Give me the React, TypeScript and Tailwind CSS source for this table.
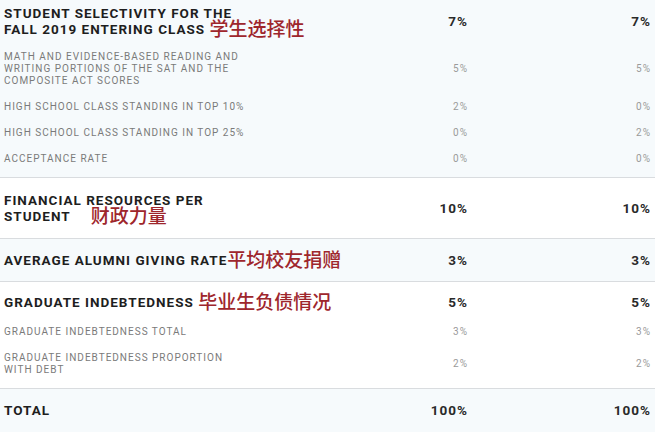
import React from "react";

type Sub = { label: React.ReactNode; a: string; b: string };

const font = { fontFamily: "Roboto, 'Noto Sans CJK SC', sans-serif" };

function Cn({ children, className = "" }: { children: React.ReactNode; className?: string }) {
  return (
    <span
      className={`align-[-2px] text-[19px] leading-[0] font-medium tracking-normal text-[#9e262c] ${className}`}
      style={{ fontFamily: "'Noto Sans CJK SC', sans-serif" }}
    >
      {children}
    </span>
  );
}

function Head({ label, value, className = "" }: { label: React.ReactNode; value: string; className?: string }) {
  return (
    <div className={`grid grid-cols-[250px_214px_183px] items-center ${className}`}>
      <div className="whitespace-nowrap text-[13.5px] leading-4 font-bold tracking-[1px] text-[#1e1e1e]">{label}</div>
      <div className="text-right text-[13.5px] leading-4 font-bold tracking-[1px] text-[#2a2a2a]">{value}</div>
      <div className="text-right text-[13.5px] leading-4 font-bold tracking-[1px] text-[#2a2a2a]">{value}</div>
    </div>
  );
}

function SubRow({ label, a, b }: Sub) {
  return (
    <div className="grid grid-cols-[250px_214px_183px] items-center py-[7px]">
      <div className="pr-1 text-[10px] leading-3 tracking-[1px] text-[#7a7a7a]">{label}</div>
      <div className="text-right text-[10px] leading-3 tracking-[1px] text-[#9a9a9a]">{a}</div>
      <div className="text-right text-[10px] leading-3 tracking-[1px] text-[#9a9a9a]">{b}</div>
    </div>
  );
}

export default function App() {
  return (
    <div className="h-[432px] w-[666px] overflow-hidden bg-white" style={font}>
      <div className="w-[655px]">
        <section className="border-b border-[#d9dcdf] bg-[#f6fafc] pt-[5px] pb-[5px] pl-1 pr-1">
          <Head
            className="pb-[7px]"
            value="7%"
            label={
              <>
                STUDENT SELECTIVITY FOR THE
                <br />
                FALL 2019 ENTERING CLASS <Cn>学生选择性</Cn>
              </>
            }
          />
          <SubRow label="MATH AND EVIDENCE-BASED READING AND WRITING PORTIONS OF THE SAT AND THE COMPOSITE ACT SCORES" a="5%" b="5%" />
          <SubRow label="HIGH SCHOOL CLASS STANDING IN TOP 10%" a="2%" b="0%" />
          <SubRow label="HIGH SCHOOL CLASS STANDING IN TOP 25%" a="0%" b="2%" />
          <SubRow label="ACCEPTANCE RATE" a="0%" b="0%" />
        </section>

        <section className="border-b border-[#d9dcdf] bg-white py-[14px] pl-1 pr-1">
          <Head
            value="10%"
            label={
              <>
                FINANCIAL RESOURCES PER
                <br />
                STUDENT <Cn className="ml-4">财政力量</Cn>
              </>
            }
          />
        </section>

        <section className="border-b border-[#d9dcdf] bg-[#f6fafc] py-[13px] pl-1 pr-1">
          <Head
            value="3%"
            label={
              <>
                AVERAGE ALUMNI GIVING RATE<Cn>平均校友捐赠</Cn>
              </>
            }
          />
        </section>

        <section className="border-b border-[#d9dcdf] bg-white pt-[12px] pb-[5px] pl-1 pr-1">
          <Head
            className="pb-[9px]"
            value="5%"
            label={
              <>
                GRADUATE INDEBTEDNESS <Cn>毕业生负债情况</Cn>
              </>
            }
          />
          <SubRow label="GRADUATE INDEBTEDNESS TOTAL" a="3%" b="3%" />
          <SubRow label="GRADUATE INDEBTEDNESS PROPORTION WITH DEBT" a="2%" b="2%" />
        </section>

        <section className="bg-[#f6fafc] pt-[13px] pb-[20px] pl-1 pr-1">
          <Head value="100%" label="TOTAL" />
        </section>
      </div>
    </div>
  );
}
